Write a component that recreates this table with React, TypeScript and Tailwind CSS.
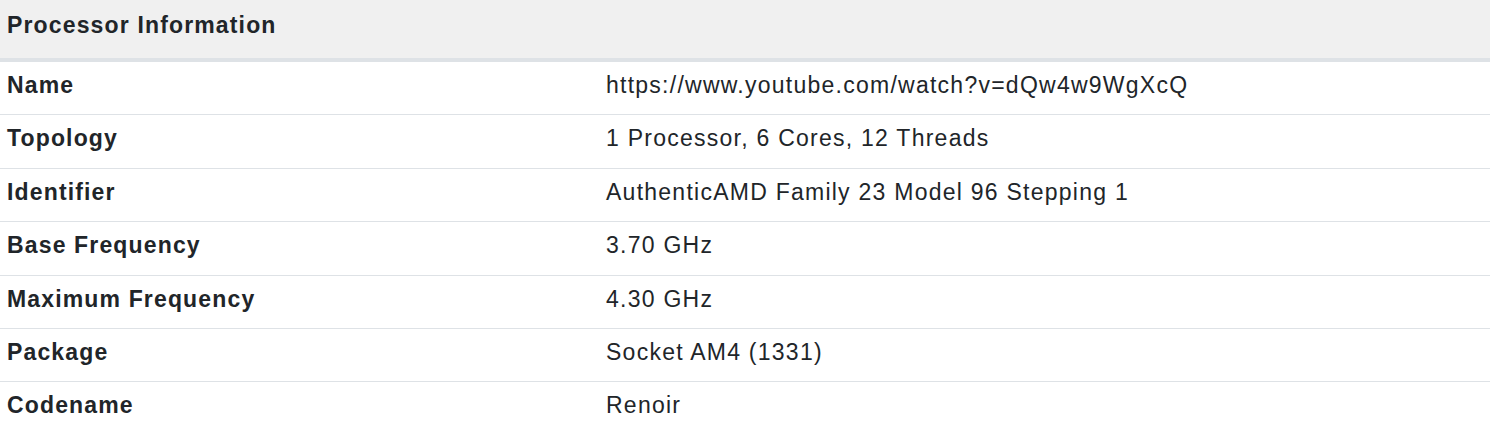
import React from 'react';

const rows: Array<[string, string]> = [
  ['Name', 'https://www.youtube.com/watch?v=dQw4w9WgXcQ'],
  ['Topology', '1 Processor, 6 Cores, 12 Threads'],
  ['Identifier', 'AuthenticAMD Family 23 Model 96 Stepping 1'],
  ['Base Frequency', '3.70 GHz'],
  ['Maximum Frequency', '4.30 GHz'],
  ['Package', 'Socket AM4 (1331)'],
  ['Codename', 'Renoir'],
];

export default function App() {
  return (
    <div className="w-[1490px] h-[432px] overflow-hidden bg-white text-[#212529] text-[23px] leading-[23px] tracking-[1.25px] font-['Liberation_Sans',Arial,sans-serif]">
      {/* Header */}
      <div className="h-[62px] bg-[#f0f0f0] border-b-4 border-[#dee2e6] pl-[7px] pt-[14px] font-bold tracking-[1.15px]">
        Processor Information
      </div>

      {/* Rows */}
      {rows.map(([label, value]) => (
        <div key={label} className="grid grid-cols-[599px_1fr] h-[53.4px] border-b border-[#dee2e6] pt-[12px]">
          <div className="pl-[7px] font-bold tracking-[1.15px]">{label}</div>
          <div className="pl-[7px]">{value}</div>
        </div>
      ))}
    </div>
  );
}
